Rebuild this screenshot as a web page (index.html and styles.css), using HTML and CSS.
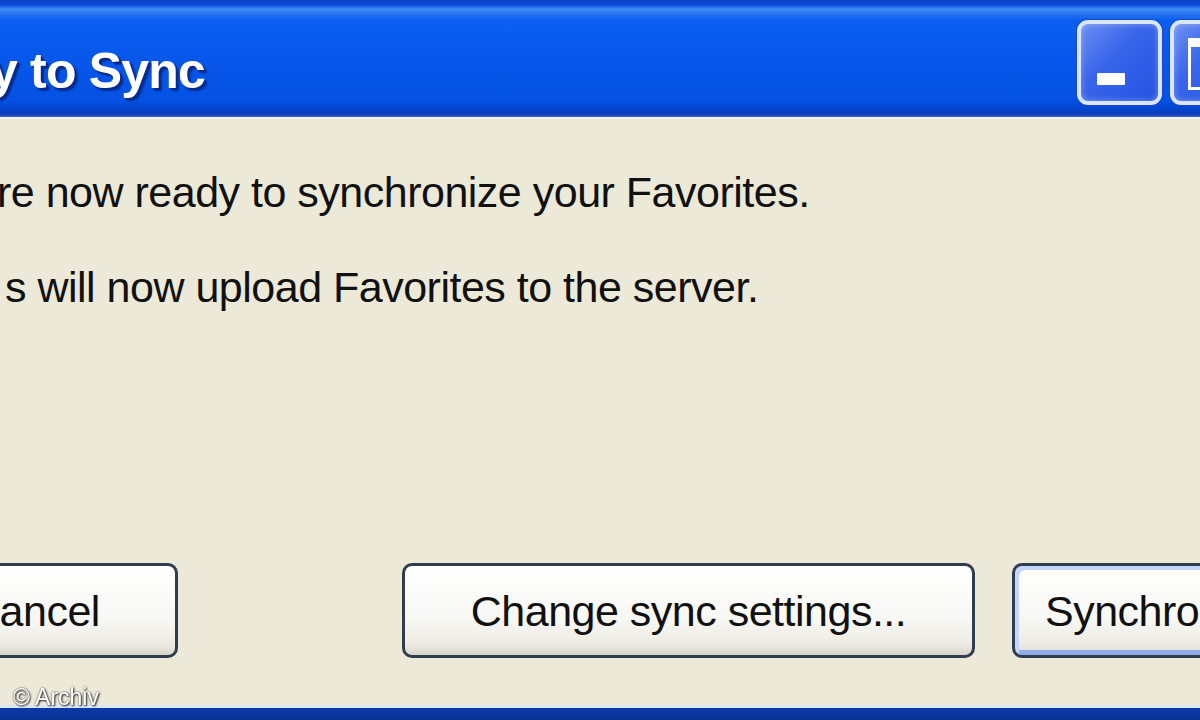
FILE: index.html
```html
<!DOCTYPE html>
<html lang="en">
<head>
    <meta charset="UTF-8">
    <meta name="viewport" content="width=device-width, initial-scale=1.0">
    <title>Ready to Sync</title>
    <link rel="stylesheet" href="styles.css">
</head>
<body>
    <div class="window">
        <div class="titlebar">
            <h1 class="title">y to Sync</h1>
            <div class="controls">
                <span class="ctl"><span class="dash"></span></span>
                <span class="ctl"><span class="box"></span></span>
            </div>
        </div>

        <div class="client">
            <p class="msg msg-first">re now ready to synchronize your Favorites.</p>
            <p class="msg">s will now upload Favorites to the server.</p>

            <div class="buttons">
                <button class="btn btn-cancel">Cancel</button>
                <button class="btn btn-change">Change sync settings...</button>
                <button class="btn btn-default">Synchronize</button>
            </div>
        </div>
    </div>

    <div class="credit">&copy; Archiv</div>
</body>
</html>
```

FILE: styles.css
```css
body {
    margin: 0;
    padding: 0;
    width: 1200px;
    height: 720px;
    overflow: hidden;
    background: #ece9d8;
    font-family: "Liberation Sans", Arial, sans-serif;
}

.window {
    width: 1260px;
    height: 720px;
    box-sizing: border-box;
    padding-bottom: 12px;
    display: flex;
    flex-direction: column;
    background: linear-gradient(to bottom, #0a3cb0 0%, #0a3cb0 98%, #08318f 100%);
}

/* title bar */
.titlebar {
    height: 117px;
    flex-shrink: 0;
    display: flex;
    justify-content: space-between;
    align-items: flex-start;
    background: linear-gradient(to bottom,
        #0842c4 0px, #0a4ad8 5px, #3f8cf7 9px, #2d78f4 13px,
        #0b5ff0 20px, #0757ea 60px, #0552e4 100px,
        #0447d2 108px, #0a3cb8 114px, #3a5fc8 117px);
}

.title {
    margin: 45px 0 0 0;
    font-family: "Liberation Sans", Arial, sans-serif;
    font-size: 50px;
    font-weight: bold;
    line-height: 52px;
    letter-spacing: -0.8px;
    color: #ffffff;
    text-indent: -10px;
    white-space: nowrap;
    text-shadow: 2px 2px 1px #0a2a8a, 3px 3px 2px rgba(0, 20, 90, 0.6);
}

.controls {
    display: flex;
    gap: 8px;
    margin-top: 20px;
    margin-right: 5px;
}

.ctl {
    width: 77px;
    height: 77px;
    border: 4px solid #d8e6ff;
    border-radius: 11px;
    background: linear-gradient(135deg, #6c8ef2 0%, #3a66ea 40%, #2452e2 100%);
    box-shadow: 0 0 0 1px #1c48c8, inset 0 0 6px rgba(255, 255, 255, 0.35);
    position: relative;
}

.dash {
    position: absolute;
    left: 16px;
    top: 49px;
    width: 28px;
    height: 12px;
    background: #ffffff;
    border-radius: 1px;
}

.box {
    position: absolute;
    left: 14px;
    top: 14px;
    width: 40px;
    height: 40px;
    border: 3px solid #ffffff;
    border-top-width: 9px;
}

/* dialog body */
.client {
    flex: 1;
    display: flex;
    flex-direction: column;
    padding: 49px 0 47px 0;
    background: #ece9d8;
    border-top: 2px solid #f4f2ea;
    border-bottom: 3px solid #dce6f6;
}

.msg {
    margin: 0 0 47px 0;
    padding-left: 5px;
    font-size: 43px;
    line-height: 48px;
    letter-spacing: -0.5px;
    color: #111111;
    white-space: nowrap;
}

.msg-first {
    padding-left: 0;
    text-indent: -3px;
}

.buttons {
    margin-top: auto;
    display: flex;
}

.btn {
    flex-shrink: 0;
    height: 95px;
    padding: 0;
    font-family: "Liberation Sans", Arial, sans-serif;
    font-size: 43px;
    line-height: 48px;
    letter-spacing: -0.5px;
    color: #111111;
    border: 3px solid #2f3d4e;
    border-radius: 10px;
    background: linear-gradient(to bottom, #ffffff 0%, #f7f7f4 60%, #eceae2 88%, #d8d6cc 100%);
    white-space: nowrap;
}

.btn-cancel {
    width: 287px;
    margin-left: -109px;
}

.btn-change {
    width: 573px;
    margin-left: 224px;
}

.btn-default {
    margin-left: 37px;
    padding: 0 30px;
    box-shadow: inset 4px 4px 0 #c4d6fb, inset -4px -5px 0 #91acea;
}

.credit {
    position: fixed;
    left: 13px;
    top: 684px;
    font-family: "Liberation Sans", Arial, sans-serif;
    font-size: 23px;
    color: #ffffff;
    text-shadow: 0 0 2px #333333, 1px 1px 2px #222222;
}
```
